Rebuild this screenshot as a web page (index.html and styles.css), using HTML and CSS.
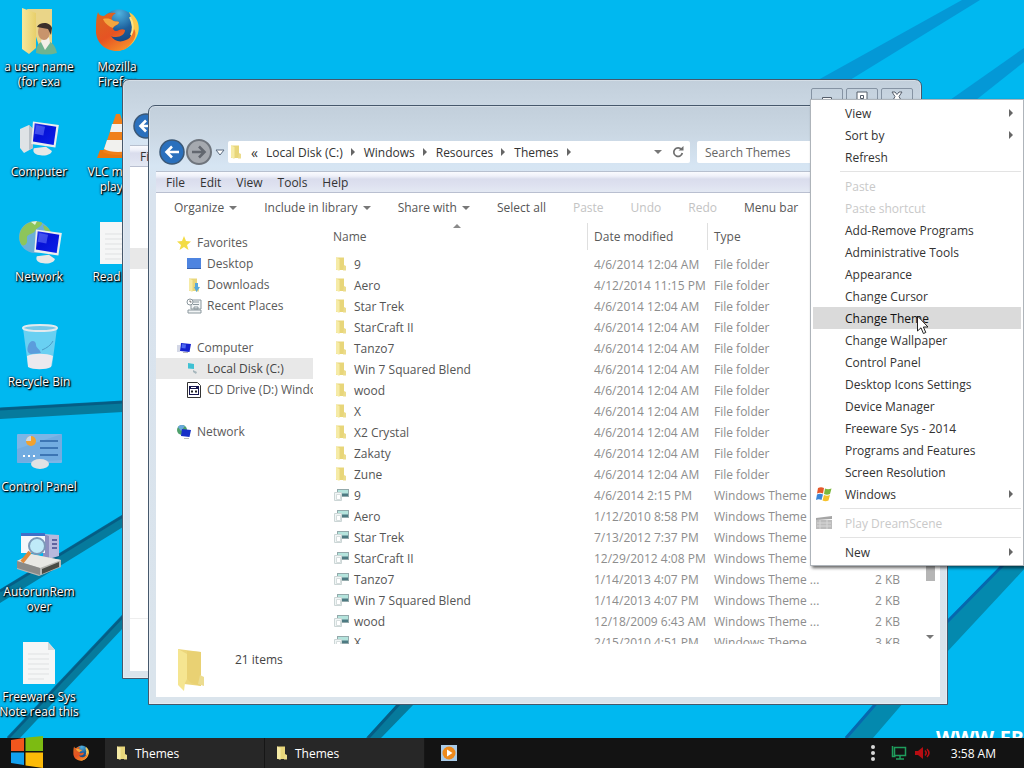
FILE: index.html
```
<!DOCTYPE html>
<html lang="en">
<head>
<meta charset="utf-8">
<title>Desktop</title>
<link rel="stylesheet" href="styles.css">
</head>
<body>
<svg class="defs" aria-hidden="true">
  <defs>
    <linearGradient id="gFold" x1="0" x2="1"><stop offset="0" stop-color="#f6e79c"/><stop offset="1" stop-color="#e8cf6a"/></linearGradient>
    <linearGradient id="gFox" x1="0" y1="0" x2="0.6" y2="1"><stop offset="0" stop-color="#d9691f"/><stop offset="0.6" stop-color="#e65323"/><stop offset="1" stop-color="#f58a2a"/></linearGradient>
    <radialGradient id="gGlobe" cx="0.5" cy="0.1" r="0.9"><stop offset="0" stop-color="#4fb3e0"/><stop offset="0.5" stop-color="#1d5f9c"/><stop offset="1" stop-color="#123f7a"/></radialGradient>
    <linearGradient id="gScreen" x1="0" y1="0" x2="1" y2="1"><stop offset="0" stop-color="#2a3cf0"/><stop offset="0.4" stop-color="#0612d8"/><stop offset="1" stop-color="#0a20e8"/></linearGradient>
    <symbol id="folder" viewBox="0 0 12 14"><path d="M1 0.5h8v12.500H4L1 13z" fill="#e8d67a"/><path d="M1 0.500L4.500 2v12L1 12.500z" fill="#f6eba6"/><path d="M9 8l2 1v4.500H8z" fill="#ecdc8c"/></symbol>
    <symbol id="theme" viewBox="0 0 16 14"><rect x="4.500" y="1.500" width="11" height="7" fill="#b5e4dd" stroke="#93a9ab"/><path d="M9 5.500h6V8H9z" fill="#4d7a82"/><path d="M1.500 4.500h7v8h-7z" fill="#f1f6f6" stroke="#ccd6d6"/><path d="M3.500 6.500h4v5h-4z" fill="#fff" stroke="#d5dddd"/></symbol>
    <symbol id="fox" viewBox="0 0 44 44"><circle cx="24" cy="20" r="18.500" fill="url(#gGlobe)"/><path d="M34 4c9 5 12 15 8 24-4 10-13 15-22 15 10-5 16-11 17-20 1-7 0-12-3-19z" fill="#fbc94a"/><path d="M35 9c3 6 4 12 1 18" stroke="#fbe58a" stroke-width="2" fill="none"/><path d="M3 4c1 3 3 4 6 4 3-3 7-4 12-3-3 2-5 4-4 7 2 2 5 1 7 2 0 3-4 3-6 6 0 1 1 3 3 3 3 0 5-3 9-1 0 4-4 7-9 7-2 0-4 0-5-1 3 5 9 7 15 4 5-2 7-6 8-11 3 4 1 11-3 15-4 5-9 7-14 7C9 43 0 33 1 21 1 15 1 9 3 4z" fill="url(#gFox)"/><path d="M8 11c4-1 8 0 9 1 2 2 5 1 7 2 0 3-5 3-6 6-3-1-8-4-10-9z" fill="#f3a63f"/></symbol>
    <symbol id="back" viewBox="0 0 26 26"><circle cx="13" cy="13" r="12" fill="#2a70bd" stroke="#3b5876" stroke-width="1.500"/><path d="M20 13H8M13 7.500L7.500 13l5.500 5.500" fill="none" stroke="#fff" stroke-width="2.600"/></symbol>
    <symbol id="monitor" viewBox="0 0 48 44"><path d="M18 34l14-2 7 5c-1 4-7 6-13 5-6 0-10-3-8-8z" fill="#e8e8e6"/><path d="M17 3l30 4-4 26-28-4z" fill="#eceded"/><path d="M19 5l25 4-3 21-24-4z" fill="url(#gScreen)"/><path d="M21 7l10 2-2 10-10-2z" fill="#5564f4" opacity="0.700"/></symbol>
    <symbol id="page" viewBox="0 0 34 44"><path d="M1 1h25l7 8v34H1z" fill="#f5f6f6"/><path d="M26 1l7 8h-7z" fill="#d5d9da"/><path d="M6 13h21M6 18h21M6 23h21M6 28h21M6 33h21M6 38h16" stroke="#dfe1e2"/></symbol>
  </defs>
</svg>

<main class="desktop">
  <svg class="wallpaper" viewBox="0 0 1024 738" preserveAspectRatio="none" aria-hidden="true">
    <g fill="#067a9c">
      <path d="M0 408L123 401v11L0 419z"/>
      <path d="M0 590L123 515v12L0 603z"/>
      <path d="M7 738L123 615v13L20 738z"/>
      <path d="M366 738L398 703h17l-34 35z"/>
      <path d="M845 738L947 621l56-57h26L947 652 873 738z" fill="#0489ae"/>
    </g>
    <g fill="#0590d0">
      <path d="M818 80L962 0h18L850 80z" opacity="0.800"/>
      <path d="M950 100L1024 48v14L976 100z" opacity="0.800"/>
    </g>
    <g stroke="#05567e" stroke-width="3" fill="none">
      <path d="M0 409L123 402M0 591L123 516M8 738L123 616M368 738L399 704" opacity="0.800"/>
      <path d="M846 738L947 622 1003 565" stroke="#0668ae"/>
    </g>
  </svg>
  <p class="watermark">WWW.FREEWARESYS.COM</p>

  <nav class="icons" aria-label="Desktop icons">
    <div class="icon-col">
      <a class="icon" href="#"><svg viewBox="0 0 48 48"><path d="M12 2h25v36l-12 4z" fill="#ead588"/><path d="M7 1l14 5v35l-7 6-7-5z" fill="url(#gFold)"/><path d="M21 46c0-7 3-12 9-12 7 0 10 4 12 12-7 2-14 2-21 0z" fill="#6fb38f"/><path d="M26 35l4 8 5-7-1-6h-7z" fill="#f2efe8"/><ellipse cx="29" cy="25" rx="6" ry="8" fill="#c8946c"/><path d="M22 20c2-5 13-6 15 1l-1 7-3-6z" fill="#3b302b"/></svg><span>a user name (for exa</span></a>
      <a class="icon" href="#"><svg viewBox="0 0 48 48"><path d="M5 17l9-4 4 4v19l-9 5-4-5z" fill="#dfe3e6"/><path d="M14 13l4 4v19l-4 2z" fill="#b9c0c6"/><use href="#monitor" x="2" y="7" width="44" height="38"/></svg><span>Computer</span></a>
      <a class="icon" href="#"><svg viewBox="0 0 48 48"><circle cx="20" cy="20" r="16" fill="#6cb0d8"/><path d="M6 13c6-10 15-9 20-8 4 3-4 5-6 9s-9 2-8 8-4 8-6 5c-3-6-1-11 0-14zM28 8c6 2 9 7 8 10-3 2-7-4-8-10z" fill="#8dc55a"/><path d="M16 5l6-1-2 4z" fill="#e4f3dc"/><use href="#monitor" x="6" y="10" width="42" height="38"/></svg><span>Network</span></a>
      <a class="icon" href="#"><svg viewBox="0 0 48 48"><path d="M8 6h34l-5 38c-5 3-19 3-24 0z" fill="#bfe3f4" opacity="0.550"/><path d="M12 34c6-3 20-3 26 0l-2 11c-5 3-18 3-23 0z" fill="#ebe9ee"/><path d="M13 24c2-7 8-6 8-1 0 3 4 4 5 8l-10 1c-4-1-4-5-3-8z" fill="#557fd0" opacity="0.650"/><path d="M27 28c5-2 9-5 11-9" stroke="#4b9cc8" fill="none"/><ellipse cx="25" cy="6" rx="17" ry="3" fill="#78c8e8" stroke="#e3eaee" stroke-width="2"/></svg><span>Recycle Bin</span></a>
      <a class="icon" href="#"><svg viewBox="0 0 48 48"><rect x="2" y="7" width="45" height="29" rx="1" fill="#7db5e6"/><path d="M2 22l45-15v26L2 36z" fill="#6ba6de" opacity="0.600"/><circle cx="16" cy="14" r="5" fill="#f2a22e"/><path d="M16 14v-5a5 5 0 00-5 5z" fill="#c9d8e8"/><path d="M25 14h18M25 21h18M25 28h18" stroke="#3c75b4" stroke-width="2"/><path d="M8 29h2m3 0h2m3 0h2" stroke="#fff" stroke-width="2"/><ellipse cx="25" cy="37" rx="9" ry="5" fill="#dfe2e4"/></svg><span>Control Panel</span></a>
      <a class="icon" href="#"><svg viewBox="0 0 48 48"><path d="M28 2l16 1v21l-14 4z" fill="#b8b9dc"/><path d="M28 2l6 2v24l-6-2z" fill="#8d8fbf"/><path d="M37 8h5M37 12h5M37 16h5" stroke="#6065a0" stroke-width="2"/><path d="M6 1h24v20H6z" fill="#f5f7fb"/><path d="M6 1h24v3H6z" fill="#3f6fc8"/><path d="M2 29l14-7 30 6v7l-22 9L2 37z" fill="#b8b8b4"/><path d="M2 29l14-7 30 6-21 8z" fill="#e8e8e4"/><path d="M2 29l23 7v7L2 36z" fill="#8a8a88"/><path d="M27 37l17-7v5l-17 7z" fill="#494b45"/><path d="M15 20l-8 10" stroke="#e08a3c" stroke-width="4"/><circle cx="22" cy="14" r="8" fill="#bfeaf8" stroke="#7d99b8" stroke-width="2"/></svg><span>AutorunRem<br>over</span></a>
      <a class="icon" href="#"><svg viewBox="0 0 48 48"><use href="#page" x="7" y="4" width="34" height="44"/></svg><span>Freeware Sys Note read this</span></a>
    </div>
    <div class="icon-col">
      <a class="icon" href="#"><svg viewBox="0 0 48 48"><use href="#fox" x="2" y="1" width="44" height="44"/></svg><span>Mozilla<br>Firefox</span></a>
      <a class="icon" href="#"><svg viewBox="0 0 48 48"><path d="M7 38h34l5 8H4z" fill="#e8770e"/><path d="M23 2h4l13 38c-6 4-24 4-30 0z" fill="#f08019"/><path d="M19 12h11l3 8H17zM14 28h21l4 9c-6 4-22 4-28 0z" fill="#f1f1ee"/></svg><span>VLC media player</span></a>
      <a class="icon" href="#"><svg viewBox="0 0 48 48"><use href="#page" x="6" y="4" width="34" height="44"/></svg><span>Read me</span></a>
    </div>
  </nav>

  <section class="window window-rear" aria-label="Themes, second window">
    <div class="caption">
      <button class="cap" aria-label="Minimize"><svg viewBox="0 0 12 12"><path d="M1.500 6.500h9v3h-9z" fill="#fff" stroke="#555e6b"/></svg></button>
      <button class="cap" aria-label="Maximize"><svg viewBox="0 0 12 12"><path d="M1 1h10v10H1zM4.500 4.500h3v3h-3z" fill="#fff" stroke="#555e6b"/></svg></button>
      <button class="cap" aria-label="Close"><svg viewBox="0 0 12 12"><path d="M1 1h3l2 2.500L8 1h3L8 5.500 11 11H8L6 8l-2 3H1l3-5.500z" fill="#fff" stroke="#555e6b"/></svg></button>
    </div>
    <div class="address-row"><button class="round" aria-label="Back"><svg viewBox="0 0 26 26"><use href="#back"/></svg></button></div>
    <div class="menubar"><button>File</button></div>
    <div class="rear-body"><div class="rear-selected"></div></div>
    <div class="details rear-details"></div>
  </section>

  <section class="window window-front" aria-label="Themes">
    <div class="caption"></div>
    <div class="address-row">
      <button class="round" aria-label="Back"><svg viewBox="0 0 26 26"><use href="#back"/></svg></button>
      <button class="round" aria-label="Forward"><svg viewBox="0 0 26 26"><circle cx="13" cy="13" r="12" fill="#a5a9af" stroke="#6f757d" stroke-width="2"/><path d="M6 13h12M13 7.500L18.500 13 13 18.500" fill="none" stroke="#62676f" stroke-width="2.600"/></svg></button>
      <button class="recent" aria-label="Recent locations"><svg viewBox="0 0 10 7"><path d="M1 1h8L5 6z" fill="#fff" stroke="#5b6b80"/></svg></button>
      <div class="address">
        <svg class="i12" viewBox="0 0 12 14"><use href="#folder"/></svg>
        <span class="chev">«</span>
        <a href="#">Local Disk (C:)</a><i class="tri-r"></i><a href="#">Windows</a><i class="tri-r"></i><a href="#">Resources</a><i class="tri-r"></i><a href="#">Themes</a><i class="tri-r"></i>
        <button class="addr-drop" aria-label="Previous locations"><i class="tri-d"></i></button>
        <button class="refresh" aria-label="Refresh"><svg viewBox="0 0 12 12"><path d="M9.500 3.500A4.300 4.300 0 1 0 10.300 7" fill="none" stroke="#6e6e6e" stroke-width="1.700"/><path d="M6.500 4.500h5V0z" fill="#6e6e6e"/></svg></button>
      </div>
      <input class="search" type="search" placeholder="Search Themes" aria-label="Search Themes">
    </div>
    <div class="menubar"><button>File</button><button>Edit</button><button>View</button><button>Tools</button><button>Help</button></div>
    <div class="toolbar">
      <button>Organize<i class="tri-d"></i></button><button>Include in library<i class="tri-d"></i></button><button>Share with<i class="tri-d"></i></button><button>Select all</button><button disabled>Paste</button><button disabled>Undo</button><button disabled>Redo</button><button>Menu bar</button>
    </div>
    <div class="panes">
      <nav class="tree" aria-label="Folders">
        <ul>
          <li><a href="#"><svg viewBox="0 0 16 16"><path d="M8 1l2 5 5 .5-4 3.500 1.500 5L8 12l-4.500 3L5 10 1 6.500 6 6z" fill="#f3dc45"/></svg>Favorites</a>
            <ul>
              <li><a href="#"><svg viewBox="0 0 16 16"><rect x="1" y="2" width="14" height="11" fill="#4e84e0"/><path d="M1 12h14v1H1z" fill="#3561b0"/></svg>Desktop</a></li>
              <li><a href="#"><svg viewBox="0 0 16 16"><use href="#folder" x="2" y="1" width="12" height="14"/><path d="M9 6h3v4h2l-3.500 5L8 10h1z" fill="#55a8dc"/></svg>Downloads</a></li>
              <li><a href="#"><svg viewBox="0 0 16 16"><path d="M5 2h10v9H5zM7 4h6M7 6.500h6M2 12h13v3H2zM8 9h4v2H8z" fill="#f2f5f6" stroke="#8b979d"/><circle cx="4" cy="4" r="3" fill="#fff" stroke="#8b979d"/><path d="M4 2.500V4h1.500" fill="none" stroke="#666"/></svg>Recent Places</a></li>
            </ul></li>
          <li><a href="#"><svg viewBox="0 0 16 16"><path d="M1 5h3v7H1z" fill="#d4d8e6"/><path d="M5 3l10 1-1.500 8L4 11z" fill="#1523cf"/><path d="M6 4l4 .5-.5 4-4-.5z" fill="#4d68f0"/><path d="M7 12h5v1H7z" fill="#bbb"/></svg>Computer</a>
            <ul>
              <li><a class="selected" href="#"><svg viewBox="0 0 16 16"><path d="M2 2l6 1v5L2 7.500z" fill="#3fc1d3"/><path d="M7 9l4 2-1 2-3-2z" fill="#a6b6bc"/></svg>Local Disk (C:)</a></li>
              <li><a href="#"><svg viewBox="0 0 16 16"><path d="M1.500 0.500h10l3 3v12h-13z" fill="#fff" stroke="#333"/><path d="M3 4h10v9H3z" fill="#15154d"/><path d="M4 7h8v5H4z" fill="#fff"/><path d="M5 8.500h2v2H5zM9 8.500h2v2H9z" fill="#222"/><path d="M5 5.500h5" stroke="#fff"/></svg>CD Drive (D:) Windo</a></li>
            </ul></li>
          <li><a href="#"><svg viewBox="0 0 16 16"><circle cx="6" cy="6" r="5" fill="#4fa06c"/><path d="M2 3c2-3 5-2 7-1L5 7z" fill="#6aa8dc"/><path d="M6 5l9 1-1.500 7L5 12z" fill="#1730c8"/><path d="M8 14h5v1H8z" fill="#bbb"/></svg>Network</a></li>
        </ul>
      </nav>
      <div class="list">
        <i class="sort-mark"></i>
        <table class="files">
          <colgroup><col><col class="c-date"><col class="c-type"><col class="c-size"></colgroup>
          <thead><tr><th><span>Name</span></th><th><span>Date modified</span></th><th><span>Type</span></th><th></th></tr></thead>
          <tbody>
            <tr><td><svg><use href="#folder"/></svg>9</td><td>4/6/2014 12:04 AM</td><td>File folder</td><td></td></tr>
            <tr><td><svg><use href="#folder"/></svg>Aero</td><td>4/12/2014 11:15 PM</td><td>File folder</td><td></td></tr>
            <tr><td><svg><use href="#folder"/></svg>Star Trek</td><td>4/6/2014 12:04 AM</td><td>File folder</td><td></td></tr>
            <tr><td><svg><use href="#folder"/></svg>StarCraft II</td><td>4/6/2014 12:04 AM</td><td>File folder</td><td></td></tr>
            <tr><td><svg><use href="#folder"/></svg>Tanzo7</td><td>4/6/2014 12:04 AM</td><td>File folder</td><td></td></tr>
            <tr><td><svg><use href="#folder"/></svg>Win 7 Squared Blend</td><td>4/6/2014 12:04 AM</td><td>File folder</td><td></td></tr>
            <tr><td><svg><use href="#folder"/></svg>wood</td><td>4/6/2014 12:04 AM</td><td>File folder</td><td></td></tr>
            <tr><td><svg><use href="#folder"/></svg>X</td><td>4/6/2014 12:04 AM</td><td>File folder</td><td></td></tr>
            <tr><td><svg><use href="#folder"/></svg>X2 Crystal</td><td>4/6/2014 12:04 AM</td><td>File folder</td><td></td></tr>
            <tr><td><svg><use href="#folder"/></svg>Zakaty</td><td>4/6/2014 12:04 AM</td><td>File folder</td><td></td></tr>
            <tr><td><svg><use href="#folder"/></svg>Zune</td><td>4/6/2014 12:04 AM</td><td>File folder</td><td></td></tr>
            <tr><td><svg><use href="#theme"/></svg>9</td><td>4/6/2014 2:15 PM</td><td>Windows Theme ...</td><td></td></tr>
            <tr><td><svg><use href="#theme"/></svg>Aero</td><td>1/12/2010 8:58 PM</td><td>Windows Theme ...</td><td></td></tr>
            <tr><td><svg><use href="#theme"/></svg>Star Trek</td><td>7/13/2012 7:37 PM</td><td>Windows Theme ...</td><td></td></tr>
            <tr><td><svg><use href="#theme"/></svg>StarCraft II</td><td>12/29/2012 4:08 PM</td><td>Windows Theme ...</td><td></td></tr>
            <tr><td><svg><use href="#theme"/></svg>Tanzo7</td><td>1/14/2013 4:07 PM</td><td>Windows Theme ...</td><td>2 KB</td></tr>
            <tr><td><svg><use href="#theme"/></svg>Win 7 Squared Blend</td><td>1/14/2013 4:07 PM</td><td>Windows Theme ...</td><td>2 KB</td></tr>
            <tr><td><svg><use href="#theme"/></svg>wood</td><td>12/18/2009 6:43 AM</td><td>Windows Theme ...</td><td>2 KB</td></tr>
            <tr><td><svg><use href="#theme"/></svg>X</td><td>2/15/2010 4:51 PM</td><td>Windows Theme ...</td><td>3 KB</td></tr>
          </tbody>
        </table>
      </div>
      <div class="scrollbar" aria-hidden="true"><span class="thumb"></span><i class="tri-d"></i></div>
    </div>
    <div class="details">
      <svg viewBox="0 0 30 44"><path d="M2 1l23 3v34l-17-2z" fill="#ecd67c"/><path d="M11 3l14 1v34l-10-3-4-4z" fill="#e9d173"/><path d="M2 1l9 5v25l-2 4-1 8-6-6z" fill="#f5e591"/><path d="M24 27l4 2v9l-6-2z" fill="#ecdc90"/></svg>
      <span>21 items</span>
    </div>
  </section>

  <div class="context" role="menu" aria-label="Desktop menu">
    <button role="menuitem">View<i class="tri-r"></i></button>
    <button role="menuitem">Sort by<i class="tri-r"></i></button>
    <button role="menuitem">Refresh</button>
    <hr>
    <button role="menuitem" disabled>Paste</button>
    <button role="menuitem" disabled>Paste shortcut</button>
    <button role="menuitem">Add-Remove Programs</button>
    <button role="menuitem">Administrative Tools</button>
    <button role="menuitem">Appearance</button>
    <button role="menuitem">Change Cursor</button>
    <button role="menuitem" class="hover">Change Theme</button>
    <button role="menuitem">Change Wallpaper</button>
    <button role="menuitem">Control Panel</button>
    <button role="menuitem">Desktop Icons Settings</button>
    <button role="menuitem">Device Manager</button>
    <button role="menuitem">Freeware Sys - 2014</button>
    <button role="menuitem">Programs and Features</button>
    <button role="menuitem">Screen Resolution</button>
    <button role="menuitem" class="with-icon"><svg viewBox="0 0 16 16"><path d="M2 2c2-1 4-1 6 0L7 7.500c-2-1-4-1-6 0z" fill="#e5582b"/><path d="M9 2.500c2 1 4 1 6.500 0L14 8c-2 1-4 1-6 0z" fill="#7cb83c"/><path d="M1 8.500c2-1 4-1 6 0L5.500 14c-2-1-3.500-1-5.500 0z" fill="#3b86d6"/><path d="M8 9c2 1 4 1 6 0l-1.500 5.500c-2 1-4 1-6 0z" fill="#f6c22c"/></svg>Windows<i class="tri-r"></i></button>
    <hr>
    <button role="menuitem" class="with-icon" disabled><svg viewBox="0 0 16 16"><path d="M0 3l16-2v3L0 5z" fill="#a5a5a5"/><path d="M0 5h16v9H0z" fill="#bcbcbc"/><path d="M1 8h14M1 11h14M4 5v9M11 5v9" stroke="#d8d8d8"/></svg>Play DreamScene</button>
    <hr>
    <button role="menuitem">New<i class="tri-r"></i></button>
  </div>

  <svg class="pointer" viewBox="0 0 14 20" aria-hidden="true"><path d="M1.500 1v15l3.500-3.200 2.400 5.700 2.400-1-2.400-5.500h4.600z" fill="#fff" stroke="#222"/></svg>
</main>

<footer class="taskbar">
  <button class="start" aria-label="Start"><svg viewBox="0 0 32 32"><path d="M0 4l13-2v13H0z" fill="#f2561d"/><path d="M14.500 1.800L32 0v15H14.500z" fill="#7cbb12"/><path d="M0 16.500h13V29L0 27z" fill="#12a0ee"/><path d="M14.500 16.500H32V32l-17.500-2.500z" fill="#fcba08"/></svg></button>
  <button class="pin" aria-label="Firefox"><svg viewBox="0 0 44 44"><use href="#fox"/></svg></button>
  <button class="task"><svg viewBox="0 0 12 14"><use href="#folder"/></svg>Themes</button>
  <button class="task"><svg viewBox="0 0 12 14"><use href="#folder"/></svg>Themes</button>
  <button class="pin" aria-label="Media player"><svg viewBox="0 0 16 16"><rect width="16" height="16" fill="#a9cbe8"/><circle cx="8" cy="8" r="6.500" fill="#ee8a1c"/><path d="M6 4.500L11.500 8 6 11.500z" fill="#fff"/></svg></button>
  <div class="tray">
    <svg class="dots" viewBox="0 0 4 16"><circle cx="2" cy="2" r="2"/><circle cx="2" cy="8" r="2"/><circle cx="2" cy="14" r="2"/></svg>
    <svg class="net" viewBox="0 0 16 16"><path d="M3.500 2.500h11v8h-11zM1.500 1v10.500h3M9 10.500v3M5 14h8" fill="none" stroke="#1f9d5c" stroke-width="1.500"/></svg>
    <svg class="vol" viewBox="0 0 16 12"><path d="M0 4h3l5-4v12L3 8H0z" fill="#b80d12"/><path d="M10 3.500c1.500 1.500 1.500 3.500 0 5M12 2c2.500 2.500 2.500 5.500 0 8" fill="none" stroke="#b80d12" stroke-width="1.500"/></svg>
    <time>3:58 AM</time>
  </div>
</footer>
</body>
</html>
```
FILE: styles.css
```
* { box-sizing: border-box; }
body {
  margin: 0;
  height: 100vh;
  display: flex;
  flex-direction: column;
  overflow: hidden;
  font: 12px/15px "Open Sans", "Noto Sans", sans-serif;
  color: #444;
}
button { margin: 0; padding: 0; border: 0; background: none; font: inherit; color: inherit; }
a { color: inherit; text-decoration: none; }
ul { list-style: none; margin: 0; padding: 0; }
svg { display: block; flex: none; }
.defs { position: absolute; width: 0; height: 0; }

.desktop { position: relative; flex: 1; min-height: 0; overflow: hidden; background: #00b8f0; }
.wallpaper { position: absolute; inset: 0; width: 100%; height: 100%; }
.watermark {
  position: absolute; left: 936px; bottom: -12px; margin: 0;
  font: bold 20px/24px "Open Sans", sans-serif; color: #fff; white-space: nowrap;
}

.icons { position: relative; display: flex; width: max-content; }
.icon-col { display: flex; flex-direction: column; width: 78px; }
.icon {
  display: flex; flex-direction: column; align-items: center; gap: 4px;
  height: 105px; padding-top: 7px;
  color: #fff; text-align: center;
  text-shadow: 1px 1px 2px #000, 1px 1px 1px #000, 0 0 2px #013;
}
.icon svg { width: 48px; height: 48px; }
.icon span { width: 84px; }

.window {
  position: absolute;
  display: flex; flex-direction: column;
  padding: 0 7px 7px;
  border: 1px solid #46586c;
  border-radius: 7px 7px 0 0;
  background: linear-gradient(#c2cfdb, #cbd8e4 30px, #d6e5f3 60px, #d9e3ee 90px, #dae4ec);
  box-shadow: inset 0 0 0 1px rgba(255, 255, 255, 0.3);
}
.window-rear { inset: 79px 102px 59px 122px; }
.window-front { inset: 105px 76px 33px 148px; }
.caption { height: 27px; display: flex; justify-content: flex-end; align-items: flex-end; gap: 3px; padding: 0 1px 1px; }
.cap { width: 32px; height: 18px; border: 1px solid #8593a3; border-radius: 2px; display: grid; place-items: center; }
.cap svg { width: 12px; height: 12px; }
.address-row { display: flex; align-items: center; height: 38px; padding: 0 0 0 3px; gap: 1px; }
.round svg { width: 26px; height: 26px; }
.recent { width: 13px; display: grid; place-items: center; }
.recent svg { width: 10px; height: 7px; }
.address { flex: 1; display: flex; align-items: center; height: 22px; margin: 0 6px 0 1px; padding: 0 6px 0 2px; background: #fff; border-radius: 2px; color: #333; }
.i12 { width: 12px; height: 14px; }
.chev { margin: 0 8px 0 9px; font-size: 14px; }
.tri-r { flex: none; width: 0; border: 4px solid transparent; border-left-color: #666; border-right: 0; }
.address .tri-r { margin: 0 9px 0 8px; }
.tri-d { flex: none; display: block; width: 0; border: 4px solid transparent; border-top-color: #777; border-bottom: 0; }
.addr-drop { margin-left: auto; padding: 4px; }
.refresh { margin-left: 6px; }
.refresh svg { width: 12px; height: 12px; }
.search { width: 243px; height: 22px; margin: 0; padding: 0 8px; border: 0; border-radius: 2px; background: #fff; font: inherit; }
.search::placeholder { color: #666; opacity: 1; }
.menubar {
  display: flex; align-items: center; gap: 15px; height: 22px; padding: 0 10px;
  border-top: 1px solid #b7c0cf; border-bottom: 1px solid #b9bfd0;
  background: linear-gradient(#fafbfe, #eff1f9 4px, #dadded 7px, #dde0ef 60%, #e4e9f3);
  color: #333;
}
.toolbar { display: flex; align-items: center; gap: 27px; height: 29px; padding: 0 18px; background: #fff; color: #555; white-space: nowrap; }
.toolbar button { display: flex; align-items: center; gap: 5px; }
button:disabled { color: #c3c3c3; }
.panes { flex: 1; min-height: 0; display: flex; background: #fff; }
.tree { width: 157px; padding-top: 10px; overflow: hidden; white-space: nowrap; color: #5a5a5a; }
.tree > ul > li { margin-bottom: 21px; }
.tree a { display: flex; align-items: center; gap: 5px; height: 21px; padding-left: 20px; }
.tree ul ul a { padding-left: 30px; }
.tree svg { width: 16px; height: 16px; }
.tree .selected { background: #e8e8e8; color: #444; }
.list { position: relative; flex: 1; min-width: 0; margin-left: 7px; overflow: hidden; }
.sort-mark { position: absolute; left: 133px; top: 2px; width: 0; border: 4px solid transparent; border-bottom-color: #8a8a8a; border-top: 0; }
.files { width: 100%; table-layout: fixed; border-collapse: collapse; text-align: left; }
.c-date { width: 120px; }
.c-type { width: 110px; }
.c-size { width: 103px; }
.files th { height: 32px; padding: 1px 0 4px; font-weight: normal; color: #5a5a5a; }
.files th span { display: block; height: 27px; line-height: 27px; padding-left: 6px; border-left: 1px solid #dfdfdf; }
.files th:first-child span { padding-left: 13px; border: 0; }
.files td { height: 21px; padding: 0 0 0 7px; white-space: nowrap; color: #8d8d8d; }
.files td:first-child { padding-left: 13px; color: #555; }
.files td:last-child { text-align: right; padding: 0 20px 0 0; }
.files td svg { display: inline-block; width: 16px; height: 14px; margin-right: 5px; vertical-align: -2px; }
.scrollbar { width: 20px; display: flex; flex-direction: column; align-items: center; justify-content: flex-end; padding-bottom: 5px; }
.thumb { width: 9px; height: 60px; margin-bottom: 54px; background: #b5b5b5; }
.details { display: flex; align-items: flex-start; gap: 29px; height: 53px; padding: 4px 20px; background: #fff; color: #444; }
.details svg { width: 30px; height: 44px; }
.details span { padding-top: 4px; }
.rear-body { flex: 1; padding-top: 81px; background: #fff; }
.rear-selected { width: 157px; height: 21px; background: #e8e8e8; }
.rear-details { border-top: 1px solid #eee; }

.context {
  position: absolute; top: 99px; right: 0; width: 214px; padding: 2px;
  display: flex; flex-direction: column;
  background: #fff; border: 1px solid #aeb4ba;
  box-shadow: 2px 2px 3px rgba(0, 0, 0, 0.6);
  color: #333;
}
.context button { display: flex; align-items: center; height: 22px; padding: 0 8px 0 32px; text-align: left; }
.context .tri-r { margin-left: auto; }
.context .with-icon { gap: 13px; padding-left: 3px; }
.context svg { width: 16px; height: 16px; }
.context button:disabled { color: #c9c9c9; }
.context .hover { background: #dadada; color: #111; }
.context hr { width: calc(100% - 27px); height: 1px; margin: 3px 0 3px 27px; border: 0; background: #e3e3e3; }
.pointer { position: absolute; left: 916px; top: 315px; width: 14px; height: 20px; }

.taskbar { position: relative; display: flex; align-items: stretch; height: 30px; background: #131313; color: #fff; }
.start { width: 57px; padding-left: 11px; display: flex; align-items: center; }
.start svg { width: 32px; height: 32px; margin-top: -2px; }
.pin { width: 48px; display: grid; place-items: center; }
.pin svg { width: 16px; height: 16px; }
.task { width: 160px; padding-left: 11px; display: flex; align-items: center; gap: 7px; background: #272727; border-right: 1px solid #161616; }
.task svg { width: 12px; height: 14px; }
.tray { margin-left: auto; display: flex; align-items: center; padding-right: 28px; }
.dots { width: 4px; height: 16px; margin-right: 16px; fill: #d8d8d8; }
.net { width: 16px; height: 16px; margin-right: 8px; }
.vol { width: 16px; height: 12px; margin-right: 20px; }
```
